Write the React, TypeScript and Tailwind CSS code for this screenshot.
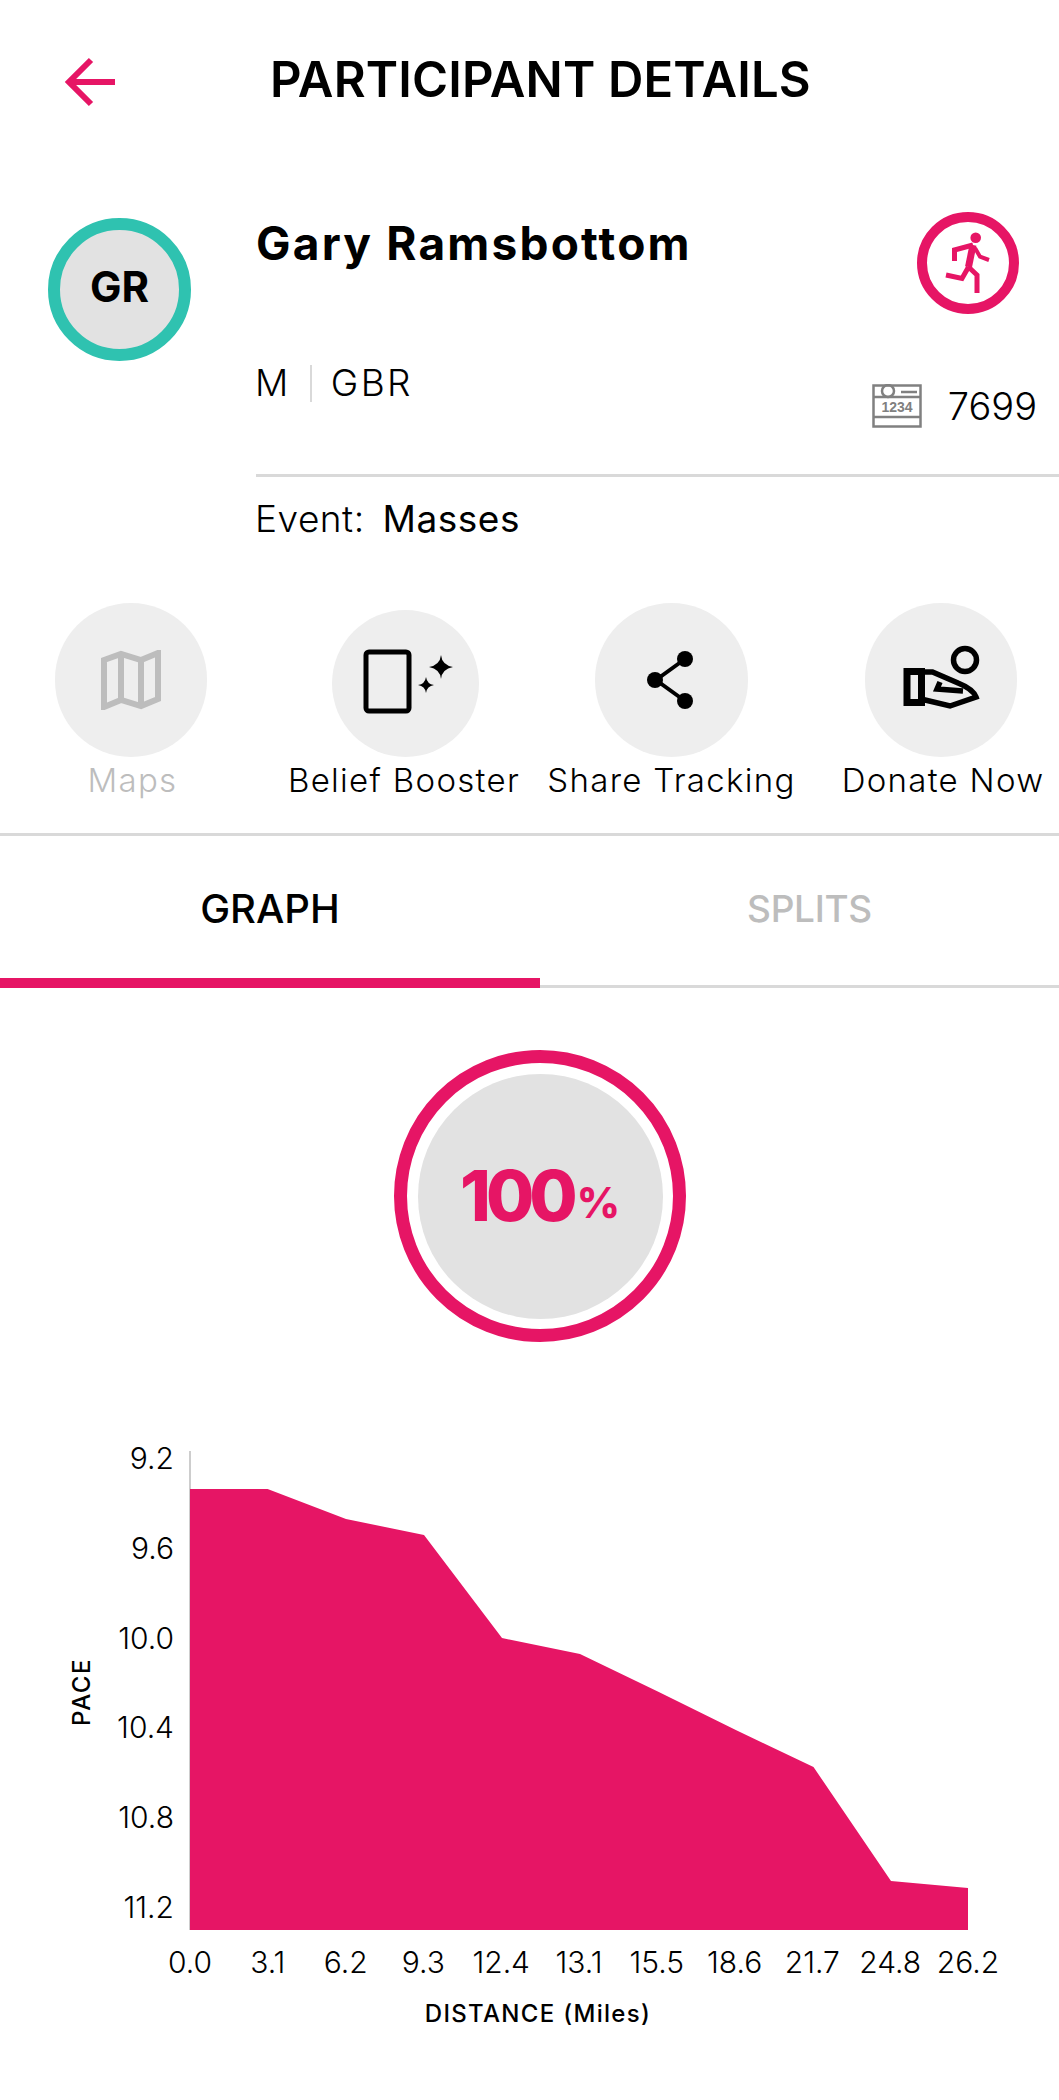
const pink = "#e61565";

const points = [
  [190, 1489], [267.6, 1489], [346, 1519], [424, 1535], [502, 1638], [580, 1654],
  [658.8, 1692], [735.8, 1730], [813.5, 1767], [891, 1881], [968, 1888],
];
const paceLabels = [
  ["9.2", 1458], ["9.6", 1548], ["10.0", 1638], ["10.4", 1727], ["10.8", 1817], ["11.2", 1907],
] as const;
const distanceLabels = ["0.0", "3.1", "6.2", "9.3", "12.4", "13.1", "15.5", "18.6", "21.7", "24.8", "26.2"];

const BackArrow = () => (
  <svg width="56" height="56" viewBox="0 0 56 56" fill="none" stroke={pink} strokeWidth="6">
    <path d="M29 6 L7 28 L29 50" />
    <path d="M7 28 H53" />
  </svg>
);

const RunnerIcon = () => (
  <svg width="102" height="102" viewBox="0 0 102 102" fill="none" stroke={pink}>
    <circle cx="51" cy="51" r="46" strokeWidth="10" />
    <circle cx="58.7" cy="25.7" r="5.3" fill={pink} stroke="none" />
    <path d="M37.5 49 V38 L56 33" strokeWidth="5" />
    <path d="M56 33 L51.5 55" strokeWidth="7" />
    <path d="M58 36 L63 44.7 L72 48" strokeWidth="4" />
    <path d="M51.5 55 L60 63 V81" strokeWidth="5" />
    <path d="M51.5 55 L45 66.5 L29 63" strokeWidth="5" />
  </svg>
);

const BibIcon = () => (
  <svg width="50" height="44" viewBox="0 0 50 44" fill="none" stroke="#808080" strokeWidth="2.5">
    <rect x="1.5" y="1.5" width="47" height="41" />
    <path d="M2 13 H48 M2 33 H48" />
    <circle cx="16" cy="7" r="6" />
    <path d="M29 8 H45" />
    <text x="25" y="28" textAnchor="middle" fill="#808080" stroke="none" fontSize="14" fontWeight="700" fontFamily="Liberation Sans, sans-serif">1234</text>
  </svg>
);

const MapIcon = () => (
  <svg width="60" height="60" viewBox="0 0 60 60" fill="none" stroke="#bdbdbd" strokeWidth="6" strokeLinejoin="miter">
    <path d="M3 10 L20 4 L40 10 L57 3 V49 L40 56 L20 50 L3 57 Z" />
    <path d="M20 4 V50 M40 10 V56" />
  </svg>
);

const BoosterIcon = () => (
  <svg className="ml-[5px]" width="92" height="70" viewBox="0 0 92 70" fill="none">
    <rect x="4" y="3" width="43" height="59" rx="3" stroke="#000" strokeWidth="5" />
    <path d="M79 6 Q80 16 91 18 Q80 20 79 30 Q78 20 67 18 Q78 16 79 6 Z" fill="#000" />
    <path d="M64 28 Q65 35 72 36 Q65 37 64 44 Q63 37 56 36 Q63 35 64 28 Z" fill="#000" />
  </svg>
);

const ShareIcon = () => (
  <svg width="50" height="60" viewBox="0 0 50 60" fill="#000" stroke="#000">
    <path d="M38 9 L9 30 L38 51" fill="none" strokeWidth="4" />
    <circle cx="38" cy="9" r="8" stroke="none" />
    <circle cx="8" cy="30" r="8" stroke="none" />
    <circle cx="38" cy="51" r="8" stroke="none" />
  </svg>
);

const DonateIcon = () => (
  <svg width="80" height="72" viewBox="0 0 80 72" fill="none" stroke="#000" strokeWidth="5.5">
    <circle cx="64" cy="16" r="11.5" />
    <rect x="6" y="27.5" width="14.5" height="31" strokeWidth="7" />
    <path d="M20 28 H31.5 L57 39 Q72 45 75 53 L49 62 L22 55.5" />
    <path d="M39 38 L36 45 L62 47" />
  </svg>
);

const actions = [
  { label: "Maps", icon: <MapIcon />, size: "w-[152px] h-[154px]", muted: true, cell: "", nudge: "ml-[3px]" },
  { label: "Belief Booster", icon: <BoosterIcon />, size: "w-[147px] h-[147px]", muted: false, cell: "", nudge: "-ml-[3px]" },
  { label: "Share Tracking", icon: <ShareIcon />, size: "w-[153px] h-[154px]", muted: false, cell: "", nudge: "" },
  { label: "Donate Now", icon: <DonateIcon />, size: "w-[152px] h-[154px]", muted: false, cell: "pl-[29px]", nudge: "ml-[4px]" },
];

export default function App() {
  return (
    <div className="w-[1059px] h-[2100px] bg-white overflow-hidden font-['Inter',sans-serif] text-black">
      {/* Header */}
      <div className="flex items-center h-[158px]">
        <div className="ml-[62px] mt-[6px]">
          <BackArrow />
        </div>
        <h1 className="ml-[152px] text-[49px] leading-none font-semibold tracking-[0.15px] whitespace-nowrap">PARTICIPANT DETAILS</h1>
      </div>

      {/* Participant */}
      <div className="flex pl-[48px] pt-[60px]">
        <div className="w-[143px] h-[143px] shrink-0 rounded-full border-[12px] border-[#2fc2b0] bg-[#e2e2e2] flex items-center justify-center pb-[6px] text-[42px] font-bold">
          GR
        </div>
        <div className="ml-[65px] flex-1 -mt-[6px]">
          <div className="flex justify-between pr-[40px]">
            <div className="text-[46px] leading-[62px] font-bold tracking-[2.2px] whitespace-nowrap">Gary Ramsbottom</div>
            <RunnerIcon />
          </div>
          <div className="flex justify-between items-start mt-[50px] pr-[22px]">
            <div className="flex items-center h-[38px] text-[37px] tracking-[2.4px] font-light -ml-[1px]">
              <span>M</span>
              <span className="w-[2px] h-[37px] bg-[#d9d9d9] mx-[19px]"></span>
              <span>GBR</span>
            </div>
            <div className="flex items-center gap-[26px] mt-[20px] h-[44px] text-[38px] font-light">
              <BibIcon />
              <span>7699</span>
            </div>
          </div>
          <div className="h-[3px] bg-[#d9d9d9] mt-[46px]"></div>
          <div className="flex items-center gap-[18px] mt-[22px] h-[40px] text-[37px] tracking-[0.5px] -ml-[1px]">
            <span className="font-light">Event:</span>
            <span>Masses</span>
          </div>
        </div>
      </div>

      {/* Actions */}
      <div className="grid grid-cols-[262px_287px_245px_265px] mt-[64px]">
        {actions.map((a) => (
          <div key={a.label} className={`flex flex-col items-center ${a.cell}`}>
            <div className="h-[154px] flex items-end">
              <div className={`${a.size} rounded-full bg-[#eeeeee] flex items-center justify-center`}>{a.icon}</div>
            </div>
            <div className={`mt-[4px] h-[38px] leading-[38px] text-[33px] tracking-[1.3px] font-light whitespace-nowrap ${a.nudge} ${a.muted ? "text-[#bdbdbd]" : ""}`}>
              {a.label}
            </div>
          </div>
        ))}
      </div>

      {/* Tabs */}
      <div className="h-[3px] bg-[#d9d9d9] mt-[34px]"></div>
      <div className="flex items-stretch h-[152px] font-medium">
        <div className="w-[540px] border-b-[10px] border-[#e61565] flex items-center justify-center pt-[4px] text-[40px]">GRAPH</div>
        <div className="flex-1 flex flex-col justify-end">
          <div className="flex-1 flex items-center justify-center text-[#bdbdbd] pb-[3px] pl-[20px] text-[37px] tracking-[-0.3px]">SPLITS</div>
          <div className="h-[3px] bg-[#d9d9d9]"></div>
        </div>
      </div>

      {/* Progress */}
      <div className="mt-[62px] ml-[394px] w-[292px] h-[292px] rounded-full border-[13px] border-[#e61565] flex items-center justify-center">
        <div className="w-[245px] h-[245px] rounded-full bg-[#e2e2e2] flex items-center justify-center text-[#e61565] font-extrabold">
          <span className="text-[70px] leading-none tracking-[-5px]">100</span>
          <span className="text-[42px] leading-none mt-[14px] ml-[4px]">%</span>
        </div>
      </div>

      {/* Chart */}
      <svg className="block mt-[98px]" width="1059" height="600" viewBox="0 1440 1059 600" fontFamily="Inter, sans-serif">
        <path d="M190 1451 V1930" stroke="#bdbdbd" strokeWidth="1.5" fill="none" />
        <polygon points={`190,1930 ${points.map((p) => p.join(",")).join(" ")} 968,1930`} fill={pink} />
        {paceLabels.map(([label, y]) => (
          <text key={label} x="174" y={y + 11} textAnchor="end" fontSize="30" fontWeight="300">
            {label}
          </text>
        ))}
        {distanceLabels.map((label, i) => (
          <text key={label} x={190 + i * 77.8} y="1973" textAnchor="middle" fontSize="30" fontWeight="300">
            {label}
          </text>
        ))}
        <text x="538" y="2022" textAnchor="middle" fontSize="24" fontWeight="500" letterSpacing="1.3">
          DISTANCE (Miles)
        </text>
        <text transform="translate(90 1692) rotate(-90)" textAnchor="middle" fontSize="24" fontWeight="500" letterSpacing="1.5">
          PACE
        </text>
      </svg>
    </div>
  );
}
